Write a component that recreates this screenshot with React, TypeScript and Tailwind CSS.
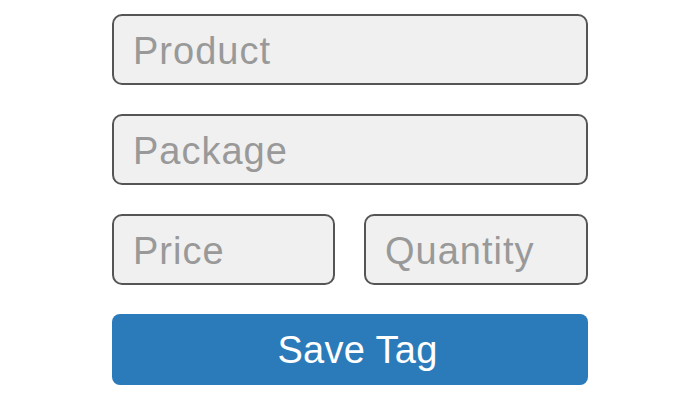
export default function App() {
  const field =
    'h-[71px] w-full rounded-[10px] border-2 border-[#555555] bg-[#f0f0f0] px-[19px] pt-[4px] text-[38px] tracking-[1px] text-[#999999] placeholder:text-[#999999] outline-none'

  return (
    <div className="flex h-[400px] w-[700px] justify-center bg-white pt-[14px] font-['Liberation_Sans',Arial,sans-serif]">
      <form className="flex w-[476px] flex-col gap-[29px]" onSubmit={(e) => e.preventDefault()}>
        <input className={field} placeholder="Product" />
        <input className={field} placeholder="Package" />
        <div className="grid grid-cols-[223px_224px] gap-[29px]">
          <input className={field} placeholder="Price" />
          <input className={field} placeholder="Quantity" />
        </div>
        <button
          type="submit"
          className="h-[71px] w-full rounded-[8px] bg-[#2b7bba] pl-[15px] pt-[2px] text-[38px] tracking-[0.3px] text-white"
        >
          Save Tag
        </button>
      </form>
    </div>
  )
}
